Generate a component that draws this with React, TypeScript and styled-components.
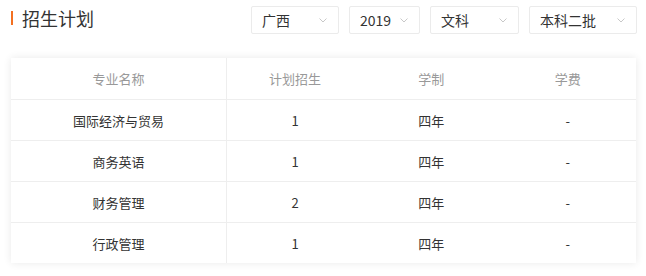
import React from 'react';
import styled, { createGlobalStyle } from 'styled-components';

const GlobalStyle = createGlobalStyle`
  body {
    margin: 0;
    background: #fff;
    font-family: "Microsoft YaHei", "Noto Sans CJK SC", sans-serif;
  }
`;

const Page = styled.div`
  width: 646px;
  height: 276px;
  padding: 6px 9px 0 11px;
  box-sizing: border-box;
`;

const Head = styled.div`
  display: flex;
  align-items: flex-start;
  justify-content: space-between;
  height: 28px;
`;

const Title = styled.h2`
  margin: 0;
  display: flex;
  align-items: center;
  gap: 9px;
  font-size: 18px;
  font-weight: normal;
  line-height: 24px;
  color: #333;
  &::before {
    content: '';
    width: 2px;
    height: 14px;
    background: #f37021;
  }
`;

const Filters = styled.div`
  display: flex;
  gap: 10px;
`;

type SelectProps = { $w: number };

const Select = styled.div<SelectProps>`
  width: ${(p) => p.$w}px;
  height: 28px;
  box-sizing: border-box;
  border: 1px solid #ebebeb;
  border-radius: 2px;
  display: flex;
  align-items: center;
  justify-content: space-between;
  padding: 0 11px 0 10px;
  font-size: 14px;
  color: #333;
`;

const Chevron = () => (
  <svg width="8" height="5" viewBox="0 0 8 5">
    <path d="M0.5 0.5 L4 4 L7.5 0.5" fill="none" stroke="#c8c8c8" strokeWidth="1" />
  </svg>
);

const Card = styled.div`
  margin-top: 24px;
  margin-right: 1px;
  box-shadow: 0 0 8px rgba(0, 0, 0, 0.09);
  background: #fff;
`;

const Table = styled.table`
  width: 100%;
  border-collapse: collapse;
  table-layout: fixed;
  font-size: 13px;
`;

const Th = styled.th`
  height: 41px;
  font-weight: normal;
  color: #999;
  text-align: center;
  border-bottom: 1px solid #eee;
  padding: 0;
  &:first-child {
    width: 215px;
    border-right: 1px solid #eee;
  }
`;

const Td = styled.td`
  height: 40px;
  color: #333;
  text-align: center;
  border-bottom: 1px solid #eee;
  padding: 0;
  &:first-child {
    border-right: 1px solid #eee;
  }
  tr:last-child > & {
    border-bottom: none;
  }
`;

const filters = [
  { label: '广西', w: 88 },
  { label: '2019', w: 71 },
  { label: '文科', w: 89 },
  { label: '本科二批', w: 108 },
];

const rows = [
  ['国际经济与贸易', '1', '四年', '-'],
  ['商务英语', '1', '四年', '-'],
  ['财务管理', '2', '四年', '-'],
  ['行政管理', '1', '四年', '-'],
];

export default function App() {
  return (
    <Page>
      <GlobalStyle />
      <Head>
        <Title>招生计划</Title>
        <Filters>
          {filters.map((f) => (
            <Select key={f.label} $w={f.w}>
              <span>{f.label}</span>
              <Chevron />
            </Select>
          ))}
        </Filters>
      </Head>
      <Card>
        <Table>
          <thead>
            <tr>
              <Th>专业名称</Th>
              <Th>计划招生</Th>
              <Th>学制</Th>
              <Th>学费</Th>
            </tr>
          </thead>
          <tbody>
            {rows.map((r) => (
              <tr key={r[0]}>
                {r.map((c, i) => (
                  <Td key={i}>{c}</Td>
                ))}
              </tr>
            ))}
          </tbody>
        </Table>
      </Card>
    </Page>
  );
}
